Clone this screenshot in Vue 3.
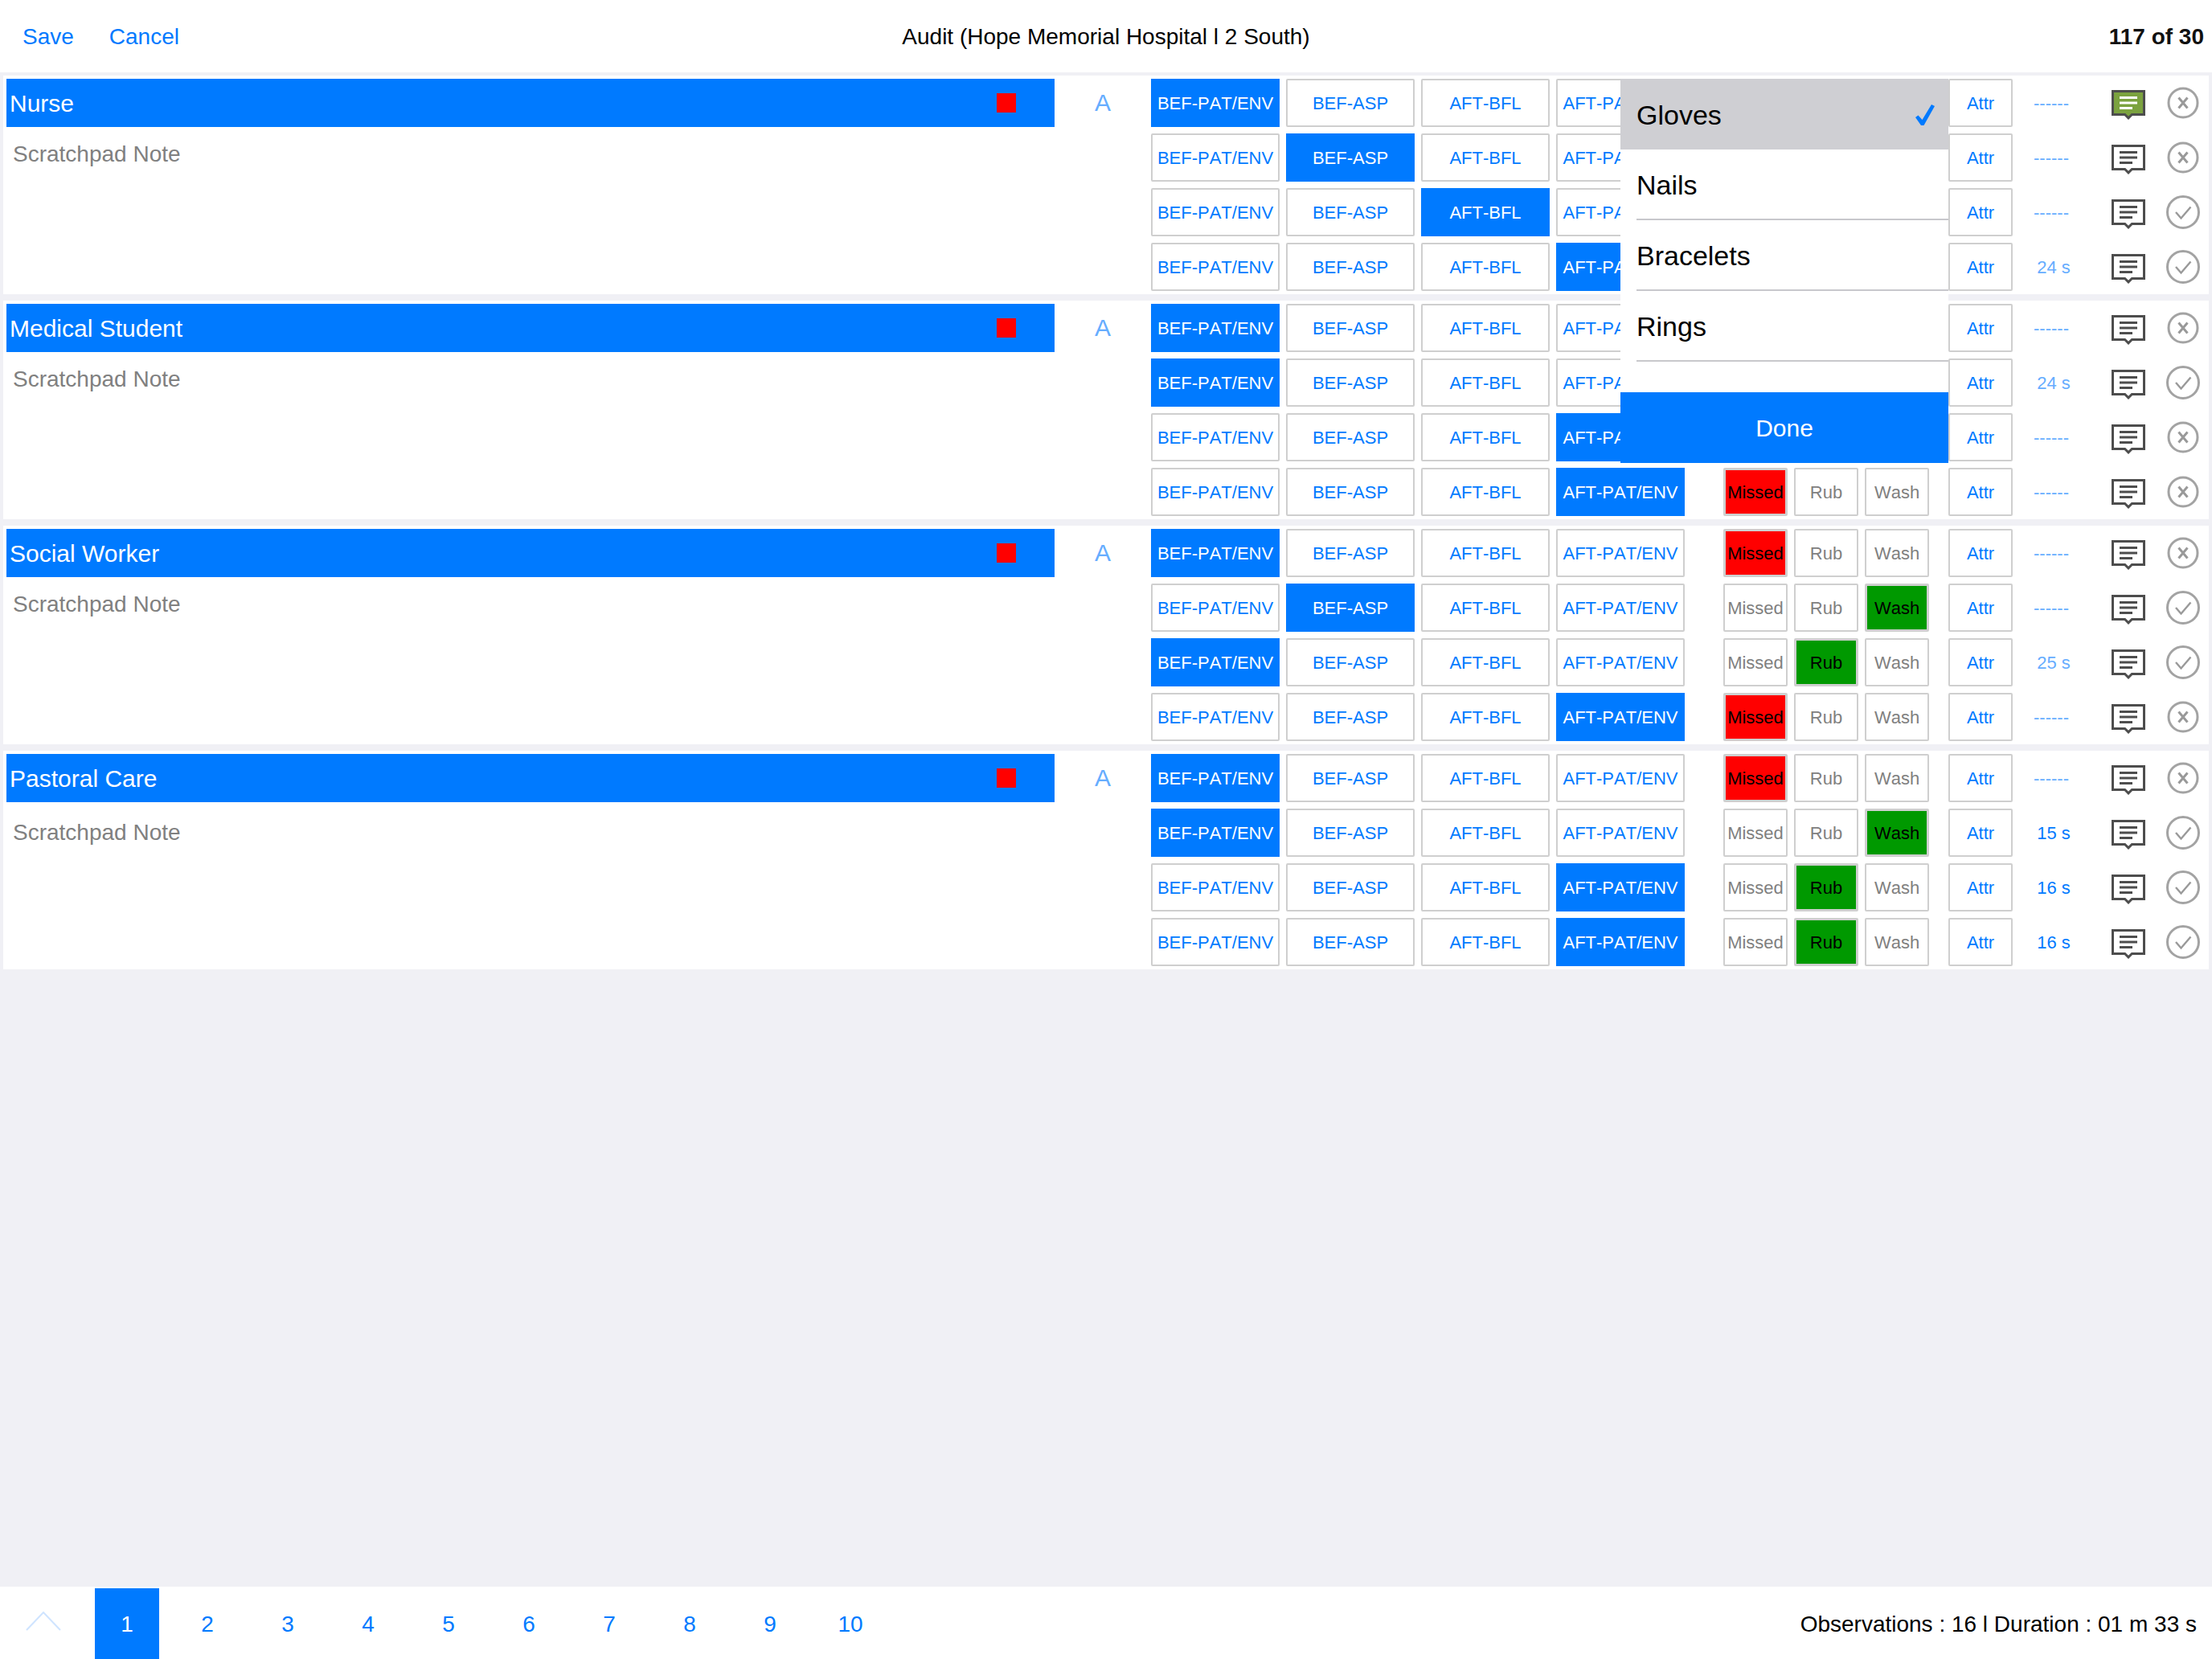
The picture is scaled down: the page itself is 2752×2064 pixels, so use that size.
<template>
  <div class="audit-page">
    <header class="top-bar">
      <div class="top-left">
        <span class="link save">Save</span>
        <span class="link">Cancel</span>
      </div>
      <div class="title">Audit (Hope Memorial Hospital l 2 South)</div>
      <div class="count">117 of 30</div>
    </header>

    <main class="sections">
      <section v-for="group in groups" :key="group.role" class="section">
        <div class="role-col">
          <div class="role-bar">
            <span class="role-name">{{ group.role }}</span>
            <span class="red-mark"></span>
          </div>
          <div :class="['note', group.lowNote ? 'note-low' : '']">Scratchpad Note</div>
        </div>
        <div class="letter">A</div>
        <div class="rows">
          <div v-for="(row, i) in group.rows" :key="i" class="row">
            <div class="moments">
              <div
                v-for="(m, idx) in moments"
                :key="m"
                :class="['btn', 'moment', row.moment === idx ? 'active' : '']"
              >{{ m }}</div>
            </div>
            <div class="actions">
              <div
                v-for="a in actions"
                :key="a"
                :class="['btn', 'action', row.action === a ? (a === 'Missed' ? 'red' : 'green') : '']"
              >{{ a }}</div>
            </div>
            <div class="btn attr">Attr</div>
            <div :class="['time', row.strong ? 'strong' : '', row.time !== '------' ? 'measured' : '']">{{ row.time }}</div>
            <svg class="comment" viewBox="0 0 42 37">
              <path
                d="M1.5 1.5H40.5V30.5H25.4L21 34.9L16.6 30.5H1.5Z"
                :fill="row.noted ? '#7ba23f' : '#fff'"
                stroke="#4d4d4d"
                stroke-width="3"
              />
              <path
                d="M10 9.5H32M10 16H32M10 22.5H26"
                :stroke="row.noted ? '#fff' : '#4d4d4d'"
                stroke-width="3"
                fill="none"
              />
            </svg>
            <svg v-if="row.done" class="status" viewBox="0 0 42 42">
              <circle cx="21" cy="21" r="19.5" fill="none" stroke="#a3a3a3" stroke-width="3" />
              <path d="M12 21L18.5 28.5L30.5 14.5" fill="none" stroke="#999" stroke-width="2.4" />
            </svg>
            <svg v-else class="status" viewBox="0 0 42 42">
              <circle cx="21" cy="21" r="18" fill="none" stroke="#a3a3a3" stroke-width="3" />
              <path d="M15.5 14.5L26.5 27.5M26.5 14.5L15.5 27.5" fill="none" stroke="#999" stroke-width="3" />
            </svg>
          </div>
        </div>
      </section>
    </main>

    <footer class="bottom-bar">
      <svg class="chevron" viewBox="0 0 44 24">
        <path d="M1 23L22 1L43 23" fill="none" stroke="#cfe4ff" stroke-width="2" />
      </svg>
      <div class="pages">
        <span
          v-for="p in pages"
          :key="p"
          :class="['page', p === 1 ? 'current' : '']"
        >{{ p }}</span>
      </div>
      <div class="summary">Observations : 16 l Duration : 01 m 33 s</div>
    </footer>

    <div class="popover">
      <div
        v-for="(item, i) in attributes"
        :key="item"
        :class="['pop-row', i === 0 ? 'picked' : '']"
      >
        <div class="pop-label">
          <span>{{ item }}</span>
          <svg v-if="i === 0" class="tick" viewBox="0 0 24 26">
            <path d="M0 16L3.5 13.5L8.5 19L20 0L24 2L10.5 26H7Z" fill="#007aff" />
          </svg>
        </div>
      </div>
      <div class="pop-spacer"></div>
      <div class="done">Done</div>
    </div>
  </div>
</template>

<script setup>
const moments = ['BEF-PAT/ENV', 'BEF-ASP', 'AFT-BFL', 'AFT-PAT/ENV']
const actions = ['Missed', 'Rub', 'Wash']
const attributes = ['Gloves', 'Nails', 'Bracelets', 'Rings']
const pages = [1, 2, 3, 4, 5, 6, 7, 8, 9, 10]

const groups = [
  {
    role: 'Nurse',
    rows: [
      { moment: 0, action: 'Missed', time: '------', done: false, noted: true },
      { moment: 1, action: 'Missed', time: '------', done: false },
      { moment: 2, action: 'Rub', time: '------', done: true },
      { moment: 3, action: 'Rub', time: '24 s', done: true }
    ]
  },
  {
    role: 'Medical Student',
    rows: [
      { moment: 0, action: 'Missed', time: '------', done: false },
      { moment: 0, action: 'Wash', time: '24 s', done: true },
      { moment: 3, action: 'Missed', time: '------', done: false },
      { moment: 3, action: 'Missed', time: '------', done: false }
    ]
  },
  {
    role: 'Social Worker',
    rows: [
      { moment: 0, action: 'Missed', time: '------', done: false },
      { moment: 1, action: 'Wash', time: '------', done: true },
      { moment: 0, action: 'Rub', time: '25 s', done: true },
      { moment: 3, action: 'Missed', time: '------', done: false }
    ]
  },
  {
    role: 'Pastoral Care',
    lowNote: true,
    rows: [
      { moment: 0, action: 'Missed', time: '------', done: false },
      { moment: 0, action: 'Wash', time: '15 s', done: true, strong: true },
      { moment: 3, action: 'Rub', time: '16 s', done: true, strong: true },
      { moment: 3, action: 'Rub', time: '16 s', done: true, strong: true }
    ]
  }
]
</script>

<style>
html,
body {
  margin: 0;
  background: #f0f0f5;
}
</style>

<style scoped>
.audit-page {
  position: relative;
  width: 2752px;
  height: 2064px;
  display: flex;
  flex-direction: column;
  background: #f0f0f5;
  font-family: "Liberation Sans", Arial, sans-serif;
  overflow: hidden;
}

.top-bar {
  height: 90px;
  flex-shrink: 0;
  box-sizing: border-box;
  padding-top: 2px;
  background: #fff;
  display: grid;
  grid-template-columns: 1fr auto 1fr;
  align-items: center;
  font-size: 28px;
}

.top-left {
  display: flex;
  padding-left: 28px;
}

.link {
  color: #007aff;
}

.save {
  margin-right: 44px;
}

.title {
  color: #000;
}

.count {
  text-align: right;
  font-weight: bold;
  padding-right: 10px;
  color: #111;
}

.sections {
  flex: 1;
  display: flex;
  flex-direction: column;
  gap: 8px;
  padding: 4px 4px 0;
}

.section {
  height: 272px;
  box-sizing: border-box;
  padding: 4px;
  background: #fff;
  display: flex;
}

.role-col {
  width: 1304px;
  flex-shrink: 0;
}

.role-bar {
  height: 60px;
  box-sizing: border-box;
  background: #007aff;
  display: flex;
  align-items: center;
  color: #fff;
  font-size: 30px;
  padding-left: 4px;
}

.role-name {
  width: 1228px;
  padding-top: 2px;
}

.red-mark {
  width: 24px;
  height: 24px;
  background: #f00;
}

.note {
  margin-top: 16px;
  padding-left: 8px;
  font-size: 28px;
  line-height: 36px;
  color: #808080;
}

.note-low {
  margin-top: 20px;
}

.letter {
  width: 120px;
  flex-shrink: 0;
  height: 60px;
  line-height: 60px;
  text-align: center;
  font-size: 30px;
  color: #66adff;
}

.rows {
  display: flex;
  flex-direction: column;
  gap: 8px;
}

.row {
  height: 60px;
  display: flex;
  align-items: center;
}

.moments,
.actions {
  display: flex;
  gap: 8px;
}

.actions {
  margin-left: 48px;
}

.btn {
  height: 60px;
  box-sizing: border-box;
  border: 2px solid #cfcfcf;
  border-radius: 2px;
  padding-top: 2px;
  display: flex;
  align-items: center;
  justify-content: center;
  font-size: 22px;
  font-kerning: none;
  white-space: nowrap;
  background: #fff;
}

.moment {
  width: 160px;
  color: #007aff;
}

.moment.active {
  background: #007aff;
  border-color: #007aff;
  border-radius: 0;
  color: #fff;
}

.action {
  width: 80px;
  color: #808080;
}

.action.red {
  background: #f00;
  color: #000;
  border-width: 3px;
}

.action.green {
  background: #009900;
  color: #000;
  border-width: 3px;
}

.attr {
  width: 80px;
  margin-left: 24px;
  color: #007aff;
}

.time {
  width: 96px;
  box-sizing: border-box;
  padding-top: 2px;
  text-align: center;
  font-size: 22px;
  color: #66adff;
}

.time.measured {
  padding-left: 6px;
}

.time.strong {
  color: #007aff;
}

.comment {
  width: 42px;
  height: 37px;
  margin-left: 27px;
  margin-top: 5px;
}

.status {
  width: 42px;
  height: 42px;
  margin-left: 26px;
}

.bottom-bar {
  height: 90px;
  flex-shrink: 0;
  box-sizing: border-box;
  padding-top: 2px;
  background: #fff;
  display: flex;
  align-items: center;
  position: relative;
  font-size: 28px;
}

.chevron {
  width: 44px;
  height: 24px;
  margin-left: 32px;
  margin-right: 42px;
  margin-top: -6px;
}

.pages {
  display: flex;
  gap: 20px;
  height: 88px;
}

.page {
  width: 80px;
  height: 88px;
  line-height: 90px;
  text-align: center;
  color: #007aff;
}

.page.current {
  background: #007aff;
  color: #fff;
}

.summary {
  margin-left: auto;
  padding-right: 19px;
  padding-top: 2px;
  color: #000;
}

.popover {
  position: absolute;
  left: 2016px;
  top: 98px;
  width: 408px;
  height: 478px;
  background: #fff;
  display: flex;
  flex-direction: column;
}

.pop-row {
  height: 88px;
  padding-left: 20px;
  font-size: 34px;
  color: #000;
}

.pop-row.picked {
  background: #cfcfd3;
}

.pop-label {
  height: 88px;
  box-sizing: border-box;
  border-bottom: 2px solid #c8c8cc;
  padding-top: 3px;
  display: flex;
  align-items: center;
  justify-content: space-between;
}

.picked .pop-label {
  border-bottom: none;
  padding-top: 2px;
}

.tick {
  width: 24px;
  height: 26px;
  margin-right: 17px;
}

.pop-spacer {
  flex: 1;
}

.done {
  height: 88px;
  box-sizing: border-box;
  padding-top: 2px;
  background: #007aff;
  color: #fff;
  font-size: 30px;
  display: flex;
  align-items: center;
  justify-content: center;
}
</style>
